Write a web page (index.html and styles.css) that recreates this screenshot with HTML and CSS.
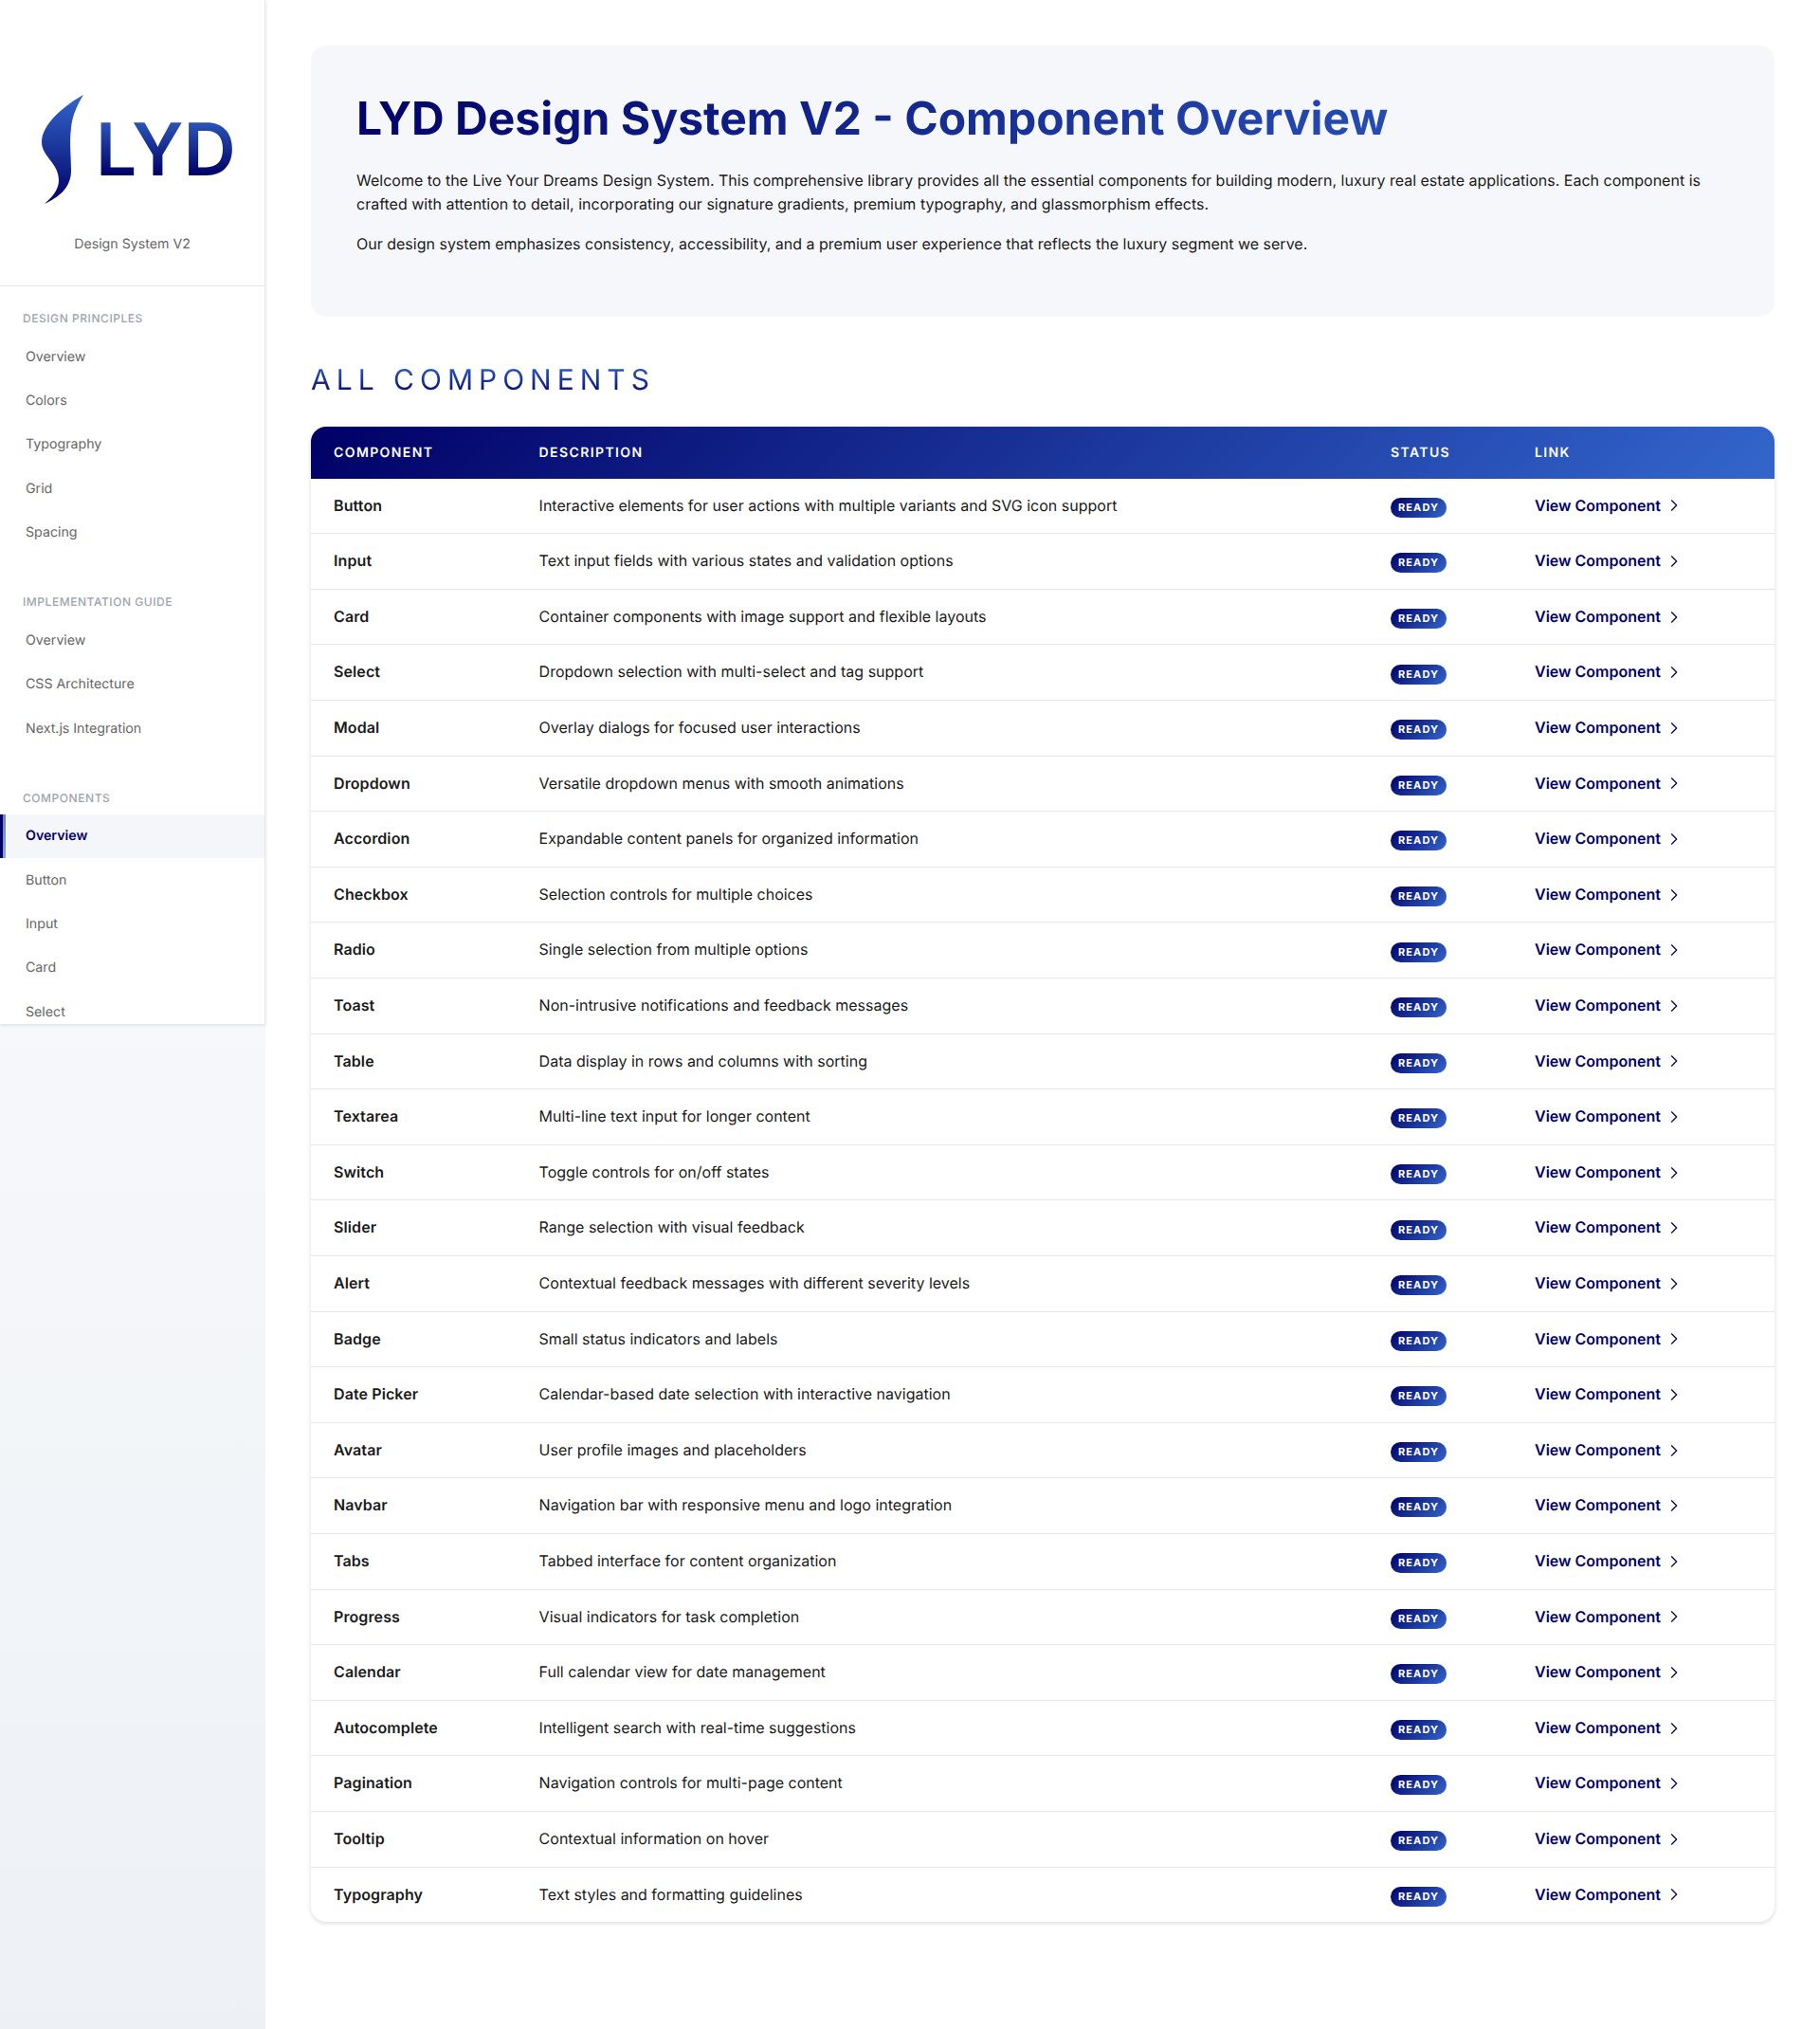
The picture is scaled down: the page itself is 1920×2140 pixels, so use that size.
FILE: index.html
```html
<!DOCTYPE html>
<html lang="en">
<head>
  <meta charset="UTF-8" />
  <meta name="viewport" content="width=device-width, initial-scale=1.0"/>
  <title>Components | LYD Design System</title>
  <link rel="stylesheet" href="styles.css">
</head>
<body>
  <aside class="sidebar">
    <div class="sidebar-header">
      <svg class="logo" width="280" height="224" viewBox="0 0 280 224" role="img" aria-label="LYD">
        <defs>
          <linearGradient id="logoGrad" x1="0" y1="0" x2="0" y2="1">
            <stop offset="0" stop-color="#3366cc"/>
            <stop offset="1" stop-color="#000066"/>
          </linearGradient>
          <linearGradient id="wordGrad" gradientUnits="userSpaceOnUse" x1="0" y1="129" x2="0" y2="185">
            <stop offset="0" stop-color="#2b55b8"/>
            <stop offset="1" stop-color="#000066"/>
          </linearGradient>
        </defs>
        <path fill="url(#logoGrad)" d="M88 100C70 110 44 130 44 150C44 165 62 172 62 190C62 200 55 208 47 215C62 208 75 198 75 180C75 165 73 150 75 135C76 122 82 110 88 100Z"/>
        <text class="logo-word" x="101" y="185" fill="url(#wordGrad)">LYD</text>
      </svg>
      <p class="sidebar-sub">Design System V2</p>
    </div>

    <nav class="sidebar-nav">
      <div class="nav-group">
        <h4>Design Principles</h4>
        <a href="#">Overview</a>
        <a href="#">Colors</a>
        <a href="#">Typography</a>
        <a href="#">Grid</a>
        <a href="#">Spacing</a>
      </div>
      <div class="nav-group">
        <h4>Implementation Guide</h4>
        <a href="#">Overview</a>
        <a href="#">CSS Architecture</a>
        <a href="#">Next.js Integration</a>
      </div>
      <div class="nav-group">
        <h4>Components</h4>
        <a href="#" class="active">Overview</a>
        <a href="#">Button</a>
        <a href="#">Input</a>
        <a href="#">Card</a>
        <a href="#">Select</a>
      </div>
    </nav>
  </aside>

  <main class="content">
    <section class="hero">
      <h1>LYD Design System V2 - Component Overview</h1>
      <p>Welcome to the Live Your Dreams Design System. This comprehensive library provides all the essential components for building modern, luxury real estate applications. Each component is crafted with attention to detail, incorporating our signature gradients, premium typography, and glassmorphism effects.</p>
      <p>Our design system emphasizes consistency, accessibility, and a premium user experience that reflects the luxury segment we serve.</p>
    </section>

    <h2 class="section-title">All Components</h2>

    <div id="tableWrap" class="table-wrap">
      <table class="comp-table">
        <thead>
          <tr>
            <th class="col-name">Component</th>
            <th class="col-desc">Description</th>
            <th class="col-status">Status</th>
            <th>Link</th>
          </tr>
        </thead>
        <tbody id="compRows"></tbody>
      </table>
    </div>
  </main>

  <script src="script.js"></script>
</body>
</html>
```

FILE: styles.css
```css
* {
  box-sizing: border-box;
}

body {
  margin: 0;
  min-height: 2140px;
  font-family: 'Inter', sans-serif;
  text-rendering: geometricPrecision;
  color: #1a1a1a;
  background: linear-gradient(180deg, #ffffff 0%, #edf1f6 100%);
}

.sidebar {
  float: left;
  width: 280px;
  height: 1080px;
  overflow: hidden;
  background: #fff;
  border-right: 1px solid #e5e7eb;
  box-shadow: 0 1px 4px rgba(0,0,0,0.12);
}

.sidebar-header {
  height: 302px;
  border-bottom: 1px solid #e5e7eb;
  text-align: center;
}

.logo {
  display: block;
}

.logo-word {
  font-family: 'Inter', sans-serif;
  font-size: 76.5px;
  font-weight: 600;
}

.sidebar-sub {
  margin: 24px 0 0;
  font-size: 14.2px;
  line-height: 20px;
  color: #666;
}

.sidebar-nav {
  padding-top: 24px;
}

.nav-group {
  margin-bottom: 40px;
}

.nav-group h4 {
  margin: 0 0 8px;
  padding: 0 24px;
  font-size: 12px;
  line-height: 19.2px;
  font-weight: 500;
  letter-spacing: 0.55px;
  text-transform: uppercase;
  color: #9ca3af;
}

.nav-group a {
  display: block;
  padding: 12.4px 24px 11.6px 27px;
  font-size: 14.2px;
  line-height: 22.4px;
  color: #666;
  text-decoration: none;
}

.nav-group a.active {
  padding-left: 24px;
  border-left: 3px solid #000066;
  background: linear-gradient(180deg, #7480b4, #8aa2e0) 0 0 / 3px 100% no-repeat, #f5f6fa;
  color: #000066;
  font-weight: 600;
}

.content {
  margin-left: 280px;
  min-height: 2140px;
  padding: 48px;
  background: #fff;
}

.hero {
  height: 286px;
  padding: 48px;
  border-radius: 16px;
  background: #f6f7fb;
}

.hero h1 {
  margin: 0 0 24px;
  font-size: 48px;
  line-height: 58px;
  font-weight: 700;
  background: linear-gradient(135deg, #000066 0%, #3366cc 100%);
  -webkit-background-clip: text;
  background-clip: text;
  color: transparent;
}

.hero p {
  margin: 0 0 17px;
  font-size: 16px;
  line-height: 25px;
  color: #1a1a1a;
}

.section-title {
  margin: 48.6px 0 31.4px;
  font-size: 30px;
  line-height: 36px;
  font-weight: 400;
  letter-spacing: 6px;
  text-transform: uppercase;
  background: linear-gradient(180deg, #3366cc 0%, #000066 100%);
  -webkit-background-clip: text;
  background-clip: text;
  color: transparent;
}

.table-wrap {
  border-radius: 16px;
  background: #fff;
  box-shadow: 0 2px 4px rgba(0,0,0,0.1), 0 0 6px rgba(0,0,0,0.05);
  overflow: hidden;
}

.comp-table {
  width: 100%;
  border-collapse: collapse;
  table-layout: fixed;
}

.comp-table thead tr {
  height: 54.7px;
  background: linear-gradient(135deg, #000066 0%, #3366cc 100%);
}

.comp-table th {
  padding: 0 24px;
  text-align: left;
  font-size: 14px;
  font-weight: 600;
  letter-spacing: 1.4px;
  text-transform: uppercase;
  color: #fff;
}

.col-name { width: 216.6px; }
.col-desc { width: 898.4px; }
.col-status { width: 152px; }

.comp-table td {
  padding: 16px 24px;
  font-size: 16px;
  line-height: 25.6px;
  border-bottom: 1px solid #e5e7eb;
}

.comp-table tr:last-child td {
  border-bottom: none;
}

.comp-name {
  font-weight: 600;
  letter-spacing: 0.1px;
}

.badge {
  display: inline-block;
  margin-top: 2px;
  padding: 4px 8px;
  border-radius: 12px;
  background: linear-gradient(135deg, #000066 0%, #3366cc 100%);
  color: #fff;
  font-size: 11px;
  line-height: 13px;
  font-weight: 700;
  letter-spacing: 1.1px;
  vertical-align: middle;
}

.view-link {
  display: inline-flex;
  align-items: center;
  gap: 6px;
  color: #000066;
  font-weight: 600;
  text-decoration: none;
}
```

FILE: script.js
```js
const components = [
  ['Button', 'Interactive elements for user actions with multiple variants and SVG icon support'],
  ['Input', 'Text input fields with various states and validation options'],
  ['Card', 'Container components with image support and flexible layouts'],
  ['Select', 'Dropdown selection with multi-select and tag support'],
  ['Modal', 'Overlay dialogs for focused user interactions'],
  ['Dropdown', 'Versatile dropdown menus with smooth animations'],
  ['Accordion', 'Expandable content panels for organized information'],
  ['Checkbox', 'Selection controls for multiple choices'],
  ['Radio', 'Single selection from multiple options'],
  ['Toast', 'Non-intrusive notifications and feedback messages'],
  ['Table', 'Data display in rows and columns with sorting'],
  ['Textarea', 'Multi-line text input for longer content'],
  ['Switch', 'Toggle controls for on/off states'],
  ['Slider', 'Range selection with visual feedback'],
  ['Alert', 'Contextual feedback messages with different severity levels'],
  ['Badge', 'Small status indicators and labels'],
  ['Date Picker', 'Calendar-based date selection with interactive navigation'],
  ['Avatar', 'User profile images and placeholders'],
  ['Navbar', 'Navigation bar with responsive menu and logo integration'],
  ['Tabs', 'Tabbed interface for content organization'],
  ['Progress', 'Visual indicators for task completion'],
  ['Calendar', 'Full calendar view for date management'],
  ['Autocomplete', 'Intelligent search with real-time suggestions'],
  ['Pagination', 'Navigation controls for multi-page content'],
  ['Tooltip', 'Contextual information on hover'],
  ['Typography', 'Text styles and formatting guidelines']
];

const rows = document.getElementById('compRows');

components.forEach(([name, desc]) => {
  const tr = document.createElement('tr');
  tr.innerHTML = `
    <td class="comp-name">${name}</td>
    <td>${desc}</td>
    <td><span class="badge">READY</span></td>
    <td>
      <a href="#" class="view-link">View Component
        <svg width="16" height="16" viewBox="0 0 16 16" fill="none" stroke="currentColor" stroke-width="1.25" stroke-linecap="round" stroke-linejoin="round"><path d="M5.5 2.8L10.7 8l-5.2 5.2"/></svg>
      </a>
    </td>
  `;
  rows.appendChild(tr);
});
```
